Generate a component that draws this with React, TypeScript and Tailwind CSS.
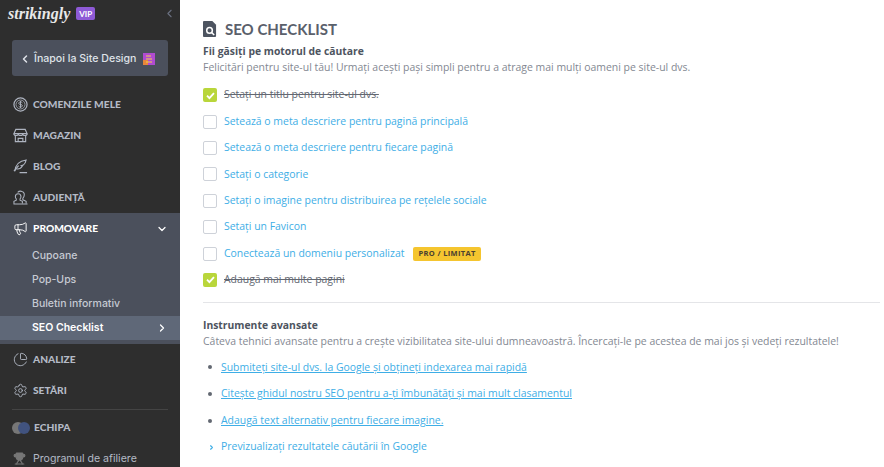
import React from 'react';
import { ChevronDown, ChevronLeft, ChevronRight, Megaphone, PieChart, Settings, Trophy } from 'lucide-react';

type IconProps = { className?: string; strokeWidth?: number };

const DollarRing = ({ className }: IconProps) => (
  <svg viewBox="0 0 16 16" fill="none" stroke="currentColor" className={className}>
    <circle cx="8" cy="8" r="7" strokeWidth="1.3" />
    <circle cx="8" cy="8" r="4.8" strokeWidth="0.8" />
    <path d="M10 6.2C9.6 5.5 8.8 5.3 8 5.3c-1 0-1.9.5-1.9 1.4C6.100 8.700 10 7.300 10 9.300c0 .9-.9 1.400-2 1.400-.8 0-1.600-.3-2-1M8 4.200v7.600" strokeWidth="1" />
  </svg>
);

const Awning = ({ className }: IconProps) => (
  <svg viewBox="0 0 16 16" fill="none" stroke="currentColor" strokeWidth="1.2" className={className}>
    <path d="M3 1.500h10l2 4.500H1z" />
    <path d="M1 6c0 1.500 1.200 2 2.300 2S5.600 7.500 5.600 6c0 1.500 1.200 2 2.400 2s2.400-.5 2.400-2c0 1.500 1.200 2 2.300 2S15 7.500 15 6" />
    <path d="M2.500 8v6.500h11V8M5.500 14.500v-3.500h5v3.500" />
  </svg>
);

const Quill = ({ className }: IconProps) => (
  <svg viewBox="0 0 16 16" fill="none" stroke="currentColor" strokeWidth="1.2" className={className}>
    <path d="M2 13C2.500 7 6 2 14 1c-.5 3-1.500 4.500-3 5.500L9 7l1 .5C8.500 10 6 11 3.500 10.500" />
    <path d="M1 13l5-6M7 14.500h8" />
  </svg>
);

const Busts = ({ className }: IconProps) => (
  <svg viewBox="0 0 16 16" fill="none" stroke="currentColor" strokeWidth="1.1" className={className}>
    <path d="M5 2.500c1-1 3-1.500 4.500-1C12 2 12.300 4.500 11.800 6.500c-.3 1.200-1 2-1.300 2.500v1.500l3.500 1.500v2.500" />
    <path d="M5.500 4c1.900 0 3 1.300 3 3.200 0 1-.5 1.800-1 2.300v1.300L10 12v2.500" />
    <path d="M5.500 4c-1.900 0-3 1.300-3 3.200 0 1 .5 1.800 1 2.300v1.300L1 12v2.500M0.500 15h15" />
  </svg>
);

const topNav = [
  { label: 'COMENZILE MELE', icon: DollarRing },
  { label: 'MAGAZIN', icon: Awning },
  { label: 'BLOG', icon: Quill },
  { label: 'AUDIENȚĂ', icon: Busts },
];

const subNav = ['Cupoane', 'Pop-Ups', 'Buletin informativ'];

const checklist = [
  { label: 'Setați un titlu pentru site-ul dvs.', done: true },
  { label: 'Setează o meta descriere pentru pagină principală' },
  { label: 'Setează o meta descriere pentru fiecare pagină' },
  { label: 'Setați o categorie' },
  { label: 'Setați o imagine pentru distribuirea pe rețelele sociale' },
  { label: 'Setați un Favicon' },
  { label: 'Conectează un domeniu personalizat', badge: 'PRO / LIMITAT' },
  { label: 'Adaugă mai multe pagini', done: true },
];

const links = [
  'Submiteți site-ul dvs. la Google și obțineți indexarea mai rapidă',
  'Citește ghidul nostru SEO pentru a-ți îmbunătăți și mai mult clasamentul',
  'Adaugă text alternativ pentru fiecare imagine.',
];

const NavItem = ({ label, icon: Icon }: { label: string; icon: React.ElementType }) => (
  <div className="flex h-[31px] items-center gap-[5px] pl-[13px]">
    <Icon className="h-[15px] w-[15px] shrink-0 text-[#aeb4c0]" strokeWidth={1.5} />
    <span className="text-[10.2px] font-black text-[#b4bac6]">{label}</span>
  </div>
);

const Checkbox = ({ done }: { done?: boolean }) =>
  done ? (
    <span className="flex h-[14px] w-[14px] shrink-0 items-center justify-center rounded-[2px] bg-[#b9d63b]">
      <svg viewBox="0 0 12 12" className="h-[11px] w-[11px]">
        <path d="M2.2 6.2l2.6 2.6 5-5.4" fill="none" stroke="#fff" strokeWidth="2" />
      </svg>
    </span>
  ) : (
    <span className="h-[14px] w-[14px] shrink-0 rounded-[2px] border border-[#ced2d9] bg-white" />
  );

export default function App() {
  return (
    <div className="flex h-[467px] w-[884px] overflow-hidden bg-white font-['Open_Sans',sans-serif]">
      <aside className="flex h-full w-[180px] shrink-0 flex-col overflow-hidden bg-[#2e2e2e] font-['Lato',sans-serif]">
        <div className="flex h-[26px] shrink-0 items-center pl-[8px] pt-[1px]">
          <span className="font-['Liberation_Serif',serif] text-[16px] font-bold italic leading-none text-[#e8e8e8]">strikingly</span>
          <span className="ml-[6px] flex h-[13px] w-[19px] items-center justify-center rounded-[2px] bg-[#8e5ad6] text-[8px] font-bold text-white">VIP</span>
          <ChevronLeft className="ml-auto mr-[4px] h-[13px] w-[13px] text-[#6a7080]" />
        </div>
        <div className="mx-[12px] mt-[14px] flex h-[36px] shrink-0 items-center rounded-[3px] bg-[#4b505c] pl-[7px] pt-[1px] font-['Inter',sans-serif] text-[10.6px] font-medium text-[#dfe2e8]">
          <ChevronLeft className="mr-[3px] h-[12px] w-[12px]" strokeWidth={3} />
          <span>Înapoi la Site Design</span>
          <svg viewBox="0 0 12 12" className="ml-[7px] h-[12px] w-[12px]">
            <rect width="12" height="12" fill="#b04bd0" />
            <rect y="7" width="5" height="5" fill="#e8863a" />
            <path d="M3 3h5M3 6h6M3 9h6" stroke="#f4d64a" strokeWidth="1" />
          </svg>
        </div>
        <nav className="mt-[13px] flex flex-col">
          {topNav.map((item) => (
            <NavItem key={item.label} {...item} />
          ))}
        </nav>
        <div className="flex shrink-0 flex-col bg-[#4b505c] pb-[4px]">
          <div className="flex h-[30px] items-center gap-[5px] pl-[13px] pr-[12px] pt-[1px]">
            <Megaphone className="h-[15px] w-[15px] shrink-0 text-white" strokeWidth={1.5} />
            <span className="text-[10.2px] font-black text-white">PROMOVARE</span>
            <ChevronDown className="ml-auto h-[12px] w-[12px] text-white" strokeWidth={2.5} />
          </div>
          <div className="flex flex-col pt-[1px] font-['Inter',sans-serif] text-[10.5px] font-medium text-[#c6cad3]">
            {subNav.map((label) => (
              <div key={label} className="flex h-[24px] items-center pl-[32px]">{label}</div>
            ))}
            <div className="flex h-[24px] items-center justify-between bg-[#5f6878] pl-[32px] pr-[12px] font-semibold text-white">
              SEO Checklist
              <ChevronRight className="h-[12px] w-[12px]" strokeWidth={2.5} />
            </div>
          </div>
        </div>
        <div className="flex flex-col">
          <NavItem label="ANALIZE" icon={PieChart} />
          <NavItem label="SETĂRI" icon={Settings} />
        </div>
        <div className="mx-[12px] mt-[3px] h-px shrink-0 bg-[#444]" />
        <div className="mt-[2px] flex h-[31px] shrink-0 items-center gap-[4px] pl-[12px]">
          <span className="flex h-[12px] w-[18px] items-center">
            <span className="h-[12px] w-[12px] rounded-full bg-[#777]" />
            <span className="-ml-[6px] h-[12px] w-[12px] rounded-full bg-[#41537f]" />
          </span>
          <span className="text-[10.2px] font-black text-[#b4bac6]">ECHIPA</span>
        </div>
        <div className="flex h-[31px] shrink-0 items-center gap-[7px] pl-[13px]">
          <Trophy className="h-[13px] w-[13px] shrink-0 text-[#777]" fill="#777" />
          <span className="font-['Inter',sans-serif] text-[10.6px] text-[#b4bac6]">Programul de afiliere</span>
        </div>
      </aside>

      <main className="min-w-0 flex-1 pl-[23px] pr-[4px] pt-[20px]">
        <div className="flex h-[18px] items-center gap-[8px]">
          <svg viewBox="0 0 15 17" className="h-[16px] w-[14px]">
            <path d="M1 0h9l4 4v12a1 1 0 0 1-1 1H1a1 1 0 0 1-1-1V1a1 1 0 0 1 1-1z" fill="#4d5460" />
            <circle cx="7" cy="10" r="3" fill="none" stroke="#fff" strokeWidth="1.6" />
            <path d="M9.2 12.2L12 15" stroke="#fff" strokeWidth="1.6" />
          </svg>
          <h1 className="font-['Lato',sans-serif] text-[15px] font-bold leading-none text-[#5a606b]">SEO CHECKLIST</h1>
        </div>
        <h2 className="mt-[6px] text-[10.35px] font-bold leading-[15px] text-[#4d5460]">Fii găsiți pe motorul de căutare</h2>
        <p className="mt-[1px] text-[10.46px] leading-[15px] text-[#838892]">Felicitări pentru site-ul tău! Urmați acești pași simpli pentru a atrage mai mulți oameni pe site-ul dvs.</p>
        <ul className="mt-[7px] flex flex-col">
          {checklist.map((item) => (
            <li key={item.label} className="flex h-[26.4px] items-center gap-[7px] text-[10.44px]">
              <Checkbox done={item.done} />
              {item.done ? (
                <span className="text-[#636872] line-through">{item.label}</span>
              ) : (
                <span className="text-[#3eaee6]">{item.label}</span>
              )}
              {item.badge && (
                <span className="ml-[2px] flex h-[14px] items-center rounded-[2px] bg-[#f5c52f] px-[5px] text-[7.5px] font-bold tracking-[0.35px] text-[#4a4030]">{item.badge}</span>
              )}
            </li>
          ))}
        </ul>
        <div className="mt-[9px] h-px bg-[#e4e5e8]" />
        <h2 className="mt-[15px] text-[10.35px] font-bold leading-[15px] text-[#4d5460]">Instrumente avansate</h2>
        <p className="mt-[1px] text-[10.46px] leading-[15px] text-[#838892]">Câteva tehnici avansate pentru a crește vizibilitatea site-ului dumneavoastră. Încercați-le pe acestea de mai jos și vedeți rezultatele!</p>
        <ul className="mt-[5px] flex flex-col text-[10.44px] text-[#3eaee6]">
          {links.map((link) => (
            <li key={link} className="flex h-[26.6px] items-center">
              <span className="ml-[5px] mr-[9px] h-[4px] w-[4px] rounded-full bg-[#636872]" />
              <a className="underline">{link}</a>
            </li>
          ))}
          <li className="flex h-[26.6px] items-center">
            <ChevronRight className="ml-[5px] mr-[6px] h-[7px] w-[7px]" strokeWidth={4} />
            Previzualizați rezultatele căutării în Google
          </li>
        </ul>
      </main>
    </div>
  );
}
